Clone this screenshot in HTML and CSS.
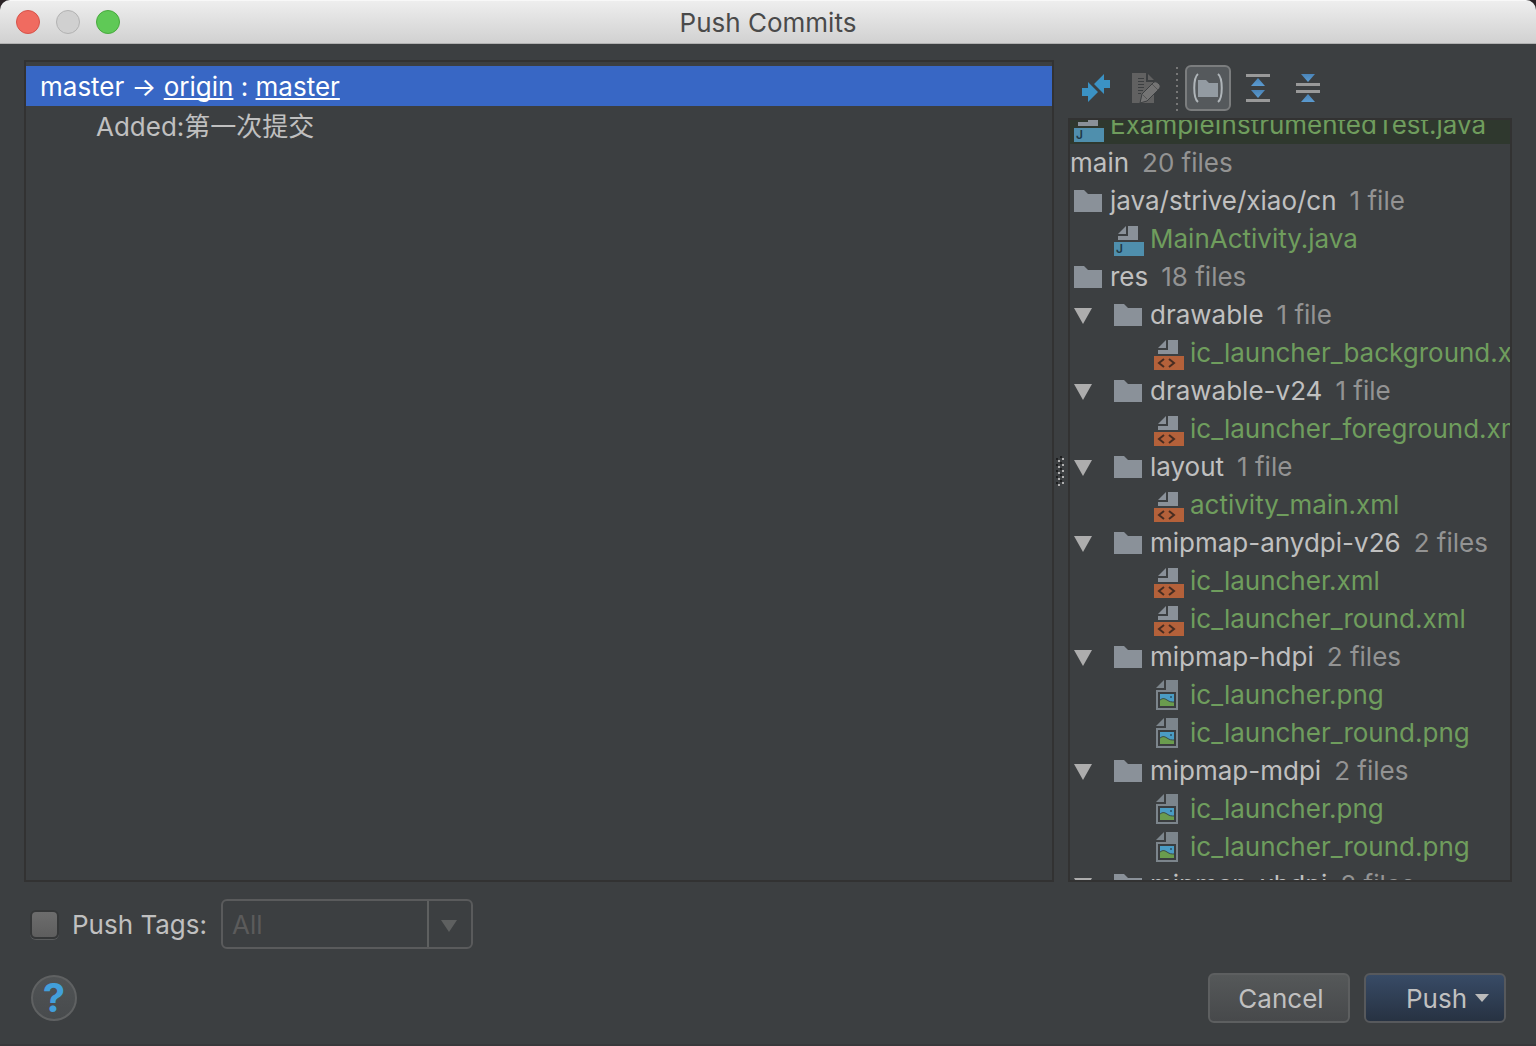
FILE: index.html
```html
<!DOCTYPE html>
<html lang="en">
<head>
    <meta charset="UTF-8">
    <meta name="viewport" content="width=device-width, initial-scale=1.0">
    <title>Push Commits</title>
    <link rel="stylesheet" href="styles.css">
</head>
<body>
<!-- shared icons, tree icons use a 40x38 cell -->
<svg class="sprite" aria-hidden="true">
    <defs>
        <linearGradient id="blue" x1="0" y1="0" x2="0" y2="1">
            <stop offset="0" stop-color="#4a84b8"/>
            <stop offset="1" stop-color="#5b9bd0"/>
        </linearGradient>
    </defs>
    <symbol id="arrow" viewBox="0 0 40 38">
        <path fill="#adadad" d="M4 12h18l-9 16z"/>
    </symbol>
    <symbol id="folder" viewBox="0 0 40 38">
        <path fill="#8a9199" d="M4 8h10l4 4h14v18H4z"/>
    </symbol>
    <symbol id="java" viewBox="0 0 40 38">
        <path fill="#8a9199" d="M16 6v8H8zM18 6h10v14H8v-4h10z"/>
        <path fill="#4f8fad" d="M4 22h30v14H4z"/>
        <text x="6" y="33" class="letter">J</text>
    </symbol>
    <symbol id="xml" viewBox="0 0 40 38">
        <path fill="#8a9199" d="M16 6v8H8zM18 6h10v14H8v-4h10z"/>
        <path fill="#b4613a" d="M4 22h30v14H4z"/>
        <path fill="none" stroke="#472d22" stroke-width="2" d="M14 25l-5 4 5 4M19 25l5 4-5 4"/>
    </symbol>
    <symbol id="png" viewBox="0 0 40 38">
        <path fill="#7c858c" d="M14 4v8H6zM16 4h12v30H6V14h10z"/>
        <path fill="#3a3d3f" d="M8 16h18v16H8z"/>
        <path fill="#4a9cc4" d="M10 18h14v12H10z"/>
        <path fill="#6a9c4e" stroke="#3a4a48" d="M9 25c3-3 5-3 8-1s4 2 8 2v5H9z"/>
        <path fill="#33637c" d="M20 20h2v2h-2z"/>
        <path fill="none" stroke="#3a3d3f" stroke-width="2" d="M9 17h16v14H9z"/>
    </symbol>
</svg>

<div class="dialog">
    <header class="titlebar">
        <div class="lights">
            <button class="light red" aria-label="Close"></button>
            <button class="light gray" aria-label="Minimize" disabled></button>
            <button class="light green" aria-label="Zoom"></button>
        </div>
        <h1>Push Commits</h1>
    </header>

    <main class="content">
        <div class="panes">
            <section class="commits">
                <div class="commit selected">master → <a href="#">origin</a> : <a href="#">master</a></div>
                <div class="commit child">Added:第一次提交</div>
            </section>

            <div class="splitter">
                <svg width="8" height="32" viewBox="0 0 8 32">
                    <path stroke="#1e1f20" stroke-width="2" stroke-dasharray="2 4" d="M1 3v28M5 1v28"/>
                    <path stroke="#b0b0b0" stroke-width="2" stroke-dasharray="2 4" d="M3 5v26M7 3v28"/>
                </svg>
            </div>

            <section class="files">
                <div class="toolbar">
                    <button class="tool" aria-label="Show Diff">
                        <svg width="28" height="28" viewBox="0 0 28 28">
                            <path fill="#3b92c4" d="M22 0v6h6v8h-6v6l-10-10zM6 8l10 10L6 28v-6H0v-8h6z"/>
                        </svg>
                    </button>
                    <button class="tool" aria-label="Edit Source" disabled>
                        <svg width="30" height="32" viewBox="0 0 30 32">
                            <path fill="#616161" d="M1 1h15l7 7v23H1z"/>
                            <path fill="#3c3f41" d="M15 1h2v7h6v2h-8z"/>
                            <path stroke="#3c3f41" d="M7 6.500h6M7 9.500h6M7 12.500h6M7 15.500h6M7 18.500h5M7 21.500h3"/>
                            <path fill="#747474" stroke="#3c3f41" d="M9 31l2-9 12-12q2-1 4 1l2 2q1 2-1 4L16 29z"/>
                            <path fill="none" stroke="#555" d="M21 12l6 6M12 23l4 4"/>
                        </svg>
                    </button>
                    <span class="separator"></span>
                    <button class="tool pressed" aria-label="Group by Directory" aria-pressed="true">
                        <svg width="30" height="30" viewBox="0 0 30 30">
                            <path fill="#939ba2" d="M5 7h8l3 3h9v14H5z"/>
                            <path fill="none" stroke="#afb5b9" stroke-width="2" d="M5 1C0 5 0 25 5 29M25 1c5 4 5 24 0 28"/>
                        </svg>
                    </button>
                    <button class="tool" aria-label="Expand All">
                        <svg width="24" height="28" viewBox="0 0 24 28">
                            <path fill="#999" d="M0 0h24v3H0zM0 25h24v3H0z"/>
                            <path fill="url(#blue)" d="M12 4l7 8H5z"/>
                            <path fill="url(#blue)" d="M5 16h14l-7 8z"/>
                        </svg>
                    </button>
                    <button class="tool" aria-label="Collapse All">
                        <svg width="24" height="28" viewBox="0 0 24 28">
                            <path fill="#999" d="M0 9h24v3H0zM0 16h24v3H0z"/>
                            <path fill="url(#blue)" d="M5 0h14l-7 8z"/>
                            <path fill="url(#blue)" d="M12 20l7 8H5z"/>
                        </svg>
                    </button>
                </div>

                <div class="tree">
                    <ul>
                        <li class="file tinted"><svg><use href="#java"/></svg>ExampleInstrumentedTest.java</li>
                        <li>main<span>20 files</span></li>
                        <li><svg><use href="#folder"/></svg>java/strive/xiao/cn<span>1 file</span></li>
                        <li class="file level1"><svg><use href="#java"/></svg>MainActivity.java</li>
                        <li><svg><use href="#folder"/></svg>res<span>18 files</span></li>
                        <li><svg><use href="#arrow"/></svg><svg><use href="#folder"/></svg>drawable<span>1 file</span></li>
                        <li class="file level2"><svg><use href="#xml"/></svg>ic_launcher_background.xml</li>
                        <li><svg><use href="#arrow"/></svg><svg><use href="#folder"/></svg>drawable-v24<span>1 file</span></li>
                        <li class="file level2"><svg><use href="#xml"/></svg>ic_launcher_foreground.xml</li>
                        <li><svg><use href="#arrow"/></svg><svg><use href="#folder"/></svg>layout<span>1 file</span></li>
                        <li class="file level2"><svg><use href="#xml"/></svg>activity_main.xml</li>
                        <li><svg><use href="#arrow"/></svg><svg><use href="#folder"/></svg>mipmap-anydpi-v26<span>2 files</span></li>
                        <li class="file level2"><svg><use href="#xml"/></svg>ic_launcher.xml</li>
                        <li class="file level2"><svg><use href="#xml"/></svg>ic_launcher_round.xml</li>
                        <li><svg><use href="#arrow"/></svg><svg><use href="#folder"/></svg>mipmap-hdpi<span>2 files</span></li>
                        <li class="file level2"><svg><use href="#png"/></svg>ic_launcher.png</li>
                        <li class="file level2"><svg><use href="#png"/></svg>ic_launcher_round.png</li>
                        <li><svg><use href="#arrow"/></svg><svg><use href="#folder"/></svg>mipmap-mdpi<span>2 files</span></li>
                        <li class="file level2"><svg><use href="#png"/></svg>ic_launcher.png</li>
                        <li class="file level2"><svg><use href="#png"/></svg>ic_launcher_round.png</li>
                        <li><svg><use href="#arrow"/></svg><svg><use href="#folder"/></svg>mipmap-xhdpi<span>2 files</span></li>
                    </ul>
                </div>
            </section>
        </div>

        <div class="tags">
            <input type="checkbox" id="pushTags">
            <label for="pushTags">Push Tags:</label>
            <div class="combo">
                <select aria-label="Tags to push" disabled>
                    <option>All</option>
                </select>
                <svg width="44" height="46" viewBox="0 0 44 46">
                    <path fill="#5e6060" d="M0 0h2v46H0zM14 19h16l-8 12z"/>
                </svg>
            </div>
        </div>

        <footer class="actions">
            <button class="help" aria-label="Help">?</button>
            <button class="btn">Cancel</button>
            <button class="btn primary">Push
                <svg width="14" height="8" viewBox="0 0 14 8"><path fill="#bbb" d="M0 0h14L7 8z"/></svg>
            </button>
        </footer>
    </main>
</div>
</body>
</html>
```
FILE: styles.css
```css
*{
    box-sizing: border-box;
}
body{
    margin: 0;
    background: #2b2326;
    color: #c0c0c0;
    font-family: Inter, "Noto Sans CJK SC", sans-serif;
    font-size: 26px;
}
button, select{
    font: inherit;
    color: inherit;
    padding: 0;
    margin: 0;
}
ul{
    list-style: none;
    margin: 0;
    padding: 0;
}
.sprite{
    position: absolute;
    width: 0;
    height: 0;
}
.letter{
    font-size: 12px;
    font-weight: 600;
    fill: #1f3a47;
}
.dialog{
    display: flex;
    flex-direction: column;
    height: 100vh;
    background: #3c3f41;
    border-radius: 10px 10px 0 0;
    overflow: hidden;
}

/* title bar */
.titlebar{
    display: grid;
    grid-template-columns: 1fr auto 1fr;
    align-items: center;
    height: 44px;
    padding: 0 16px;
    background: linear-gradient(#eeeeee, #d1d1d1);
    border-top: 1px solid #f8f8f8;
    border-bottom: 1px solid #b1b1b1;
}
.titlebar h1{
    margin: 0;
    color: #4a4a4a;
    font-size: 26px;
    font-weight: 400;
}
.lights{
    display: flex;
    gap: 16px;
}
.light{
    width: 24px;
    height: 24px;
    border: 1px solid;
    border-radius: 50%;
}
.red{
    background: #f06b60;
    border-color: #d6534a;
}
.gray{
    background: #d0d0d0;
    border-color: #b2b2b2;
}
.green{
    background: #5fc956;
    border-color: #48a93e;
}

.content{
    flex: 1;
    min-height: 0;
    display: flex;
    flex-direction: column;
    padding: 16px 24px 21px;
    border-bottom: 2px solid #38393b;
}
.panes{
    flex: 1;
    min-height: 0;
    display: grid;
    grid-template-columns: minmax(0, 1fr) 14px 444px;
}

/* commits */
.commits{
    border: 2px solid #323232;
    padding-top: 4px;
}
.commit{
    height: 40px;
    line-height: 42px;
    padding-left: 14px;
    white-space: pre;
}
.commit a{
    color: inherit;
    text-decoration-thickness: 2px;
    text-underline-offset: 2px;
    text-decoration-skip-ink: none;
}
.selected{
    background: #3867c5;
    color: #ffffff;
}
.child{
    padding-left: 70px;
}
.splitter{
    display: flex;
    align-items: center;
    justify-content: center;
    padding-right: 2px;
}

/* changed files */
.files{
    display: flex;
    flex-direction: column;
    min-height: 0;
}
.toolbar{
    display: flex;
    gap: 4px;
    padding: 5px 5px 7px;
}
.tool{
    display: flex;
    align-items: center;
    justify-content: center;
    width: 46px;
    height: 46px;
    background: none;
    border: 2px solid transparent;
    border-radius: 6px;
}
.pressed{
    background: #55595c;
    border-color: #7b7d7e;
}
.separator{
    width: 8px;
    background: repeating-linear-gradient(transparent 0 2px, #777777 2px 4px, transparent 4px 6px) center / 2px 100% no-repeat;
}
.tree{
    flex: 1;
    min-height: 0;
    overflow: hidden;
    border: 2px solid #323232;
}
/* scrolled past the upper part of the first row */
.tree ul{
    margin-top: -14px;
}
.tree li{
    display: flex;
    height: 38px;
    line-height: 38px;
    white-space: nowrap;
}
.tree svg{
    flex: none;
    width: 40px;
    height: 38px;
}
.tree span{
    margin-left: 13px;
    color: #939393;
}
.tree .file{
    color: #6f9d5d;
}
.tree .tinted{
    background: #2f382e;
}
.tree .level1{
    padding-left: 40px;
}
.tree .level2{
    padding-left: 80px;
}

/* push tags */
.tags{
    display: flex;
    align-items: center;
    padding: 17px 6px 0;
}
.tags input{
    appearance: none;
    width: 29px;
    height: 29px;
    margin: 0 13px 0 0;
    background: linear-gradient(#6d6d6d, #5e5e5e);
    border: 2px solid #353738;
    border-radius: 6px;
    box-shadow: 0 1px 0 #5a5c5d;
}
.combo{
    display: flex;
    width: 252px;
    height: 50px;
    margin-left: 14px;
    border: 2px solid #5a5b5c;
    border-radius: 6px;
}
.combo select{
    flex: 1;
    appearance: none;
    padding-left: 9px;
    background: none;
    border: 0;
    color: #5b5b5b;
    opacity: 1;
}

/* bottom buttons */
.actions{
    display: flex;
    align-items: center;
    gap: 14px;
    padding: 24px 6px 0 7px;
}
.help{
    width: 46px;
    height: 46px;
    margin-right: auto;
    background: linear-gradient(#505355, #484b4d);
    border: 2px solid #5f6162;
    border-radius: 50%;
    color: #429fdb;
    font-size: 40px;
    font-weight: 700;
    line-height: 40px;
}
.btn{
    display: flex;
    align-items: center;
    justify-content: center;
    gap: 8px;
    width: 142px;
    height: 50px;
    padding-left: 4px;
    background: linear-gradient(#555859, #47494b);
    border: 2px solid #5d5f60;
    border-radius: 6px;
}
.primary{
    justify-content: flex-end;
    padding-right: 15px;
    background: linear-gradient(#384b66, #273242);
    border-color: #57595c;
}
```
